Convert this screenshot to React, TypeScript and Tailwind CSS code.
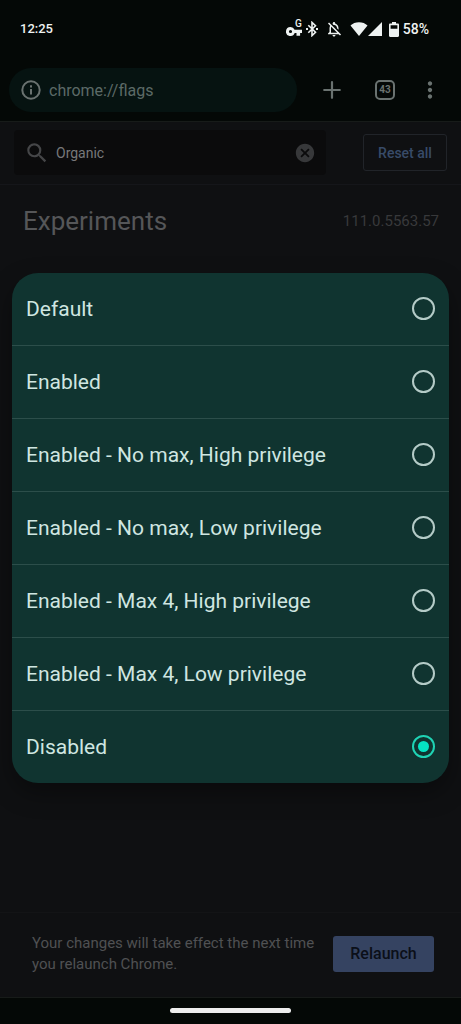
import { useState } from 'react'
import { MdCancel, MdMoreVert, MdOutlineNotificationsOff, MdSearch } from 'react-icons/md'

const OPTIONS = [
  'Default',
  'Enabled',
  'Enabled - No max, High privilege',
  'Enabled - No max, Low privilege',
  'Enabled - Max 4, High privilege',
  'Enabled - Max 4, Low privilege',
  'Disabled',
]

function KeyIcon() {
  return (
    <span className="relative block w-4 h-4">
      <svg viewBox="0 0 16 16" className="w-4 h-4" fill="currentColor" aria-hidden="true">
        <path
          fillRule="evenodd"
          d="M4.500 6a4.500 4.500 0 1 0 4.200 6h1.800v2.800h3.600V12H16V8.800H8.600A4.500 4.500 0 0 0 4.500 6zm0 2.900a1.600 1.600 0 1 1 0 3.200 1.600 1.600 0 0 1 0-3.200z"
        />
      </svg>
      <span className="absolute right-0 -top-[2px] text-[10px] leading-[10px] font-medium">G</span>
    </span>
  )
}

function BluetoothIcon() {
  return (
    <svg viewBox="0 0 14 16" className="w-[14px] h-4" fill="none" stroke="currentColor" strokeWidth="1.6" aria-hidden="true">
      <path d="M3.300 4.300l7.200 7L7 14.600V1.400l3.500 3.300-7.200 7" />
      <path d="M1 8h2M11 8h2" strokeWidth="2" />
    </svg>
  )
}

function WifiIcon() {
  return (
    <svg viewBox="0 0 18 14" className="w-[18px] h-[14px]" fill="currentColor" aria-hidden="true">
      <path d="M9 14 0.500 3.600C2.600 1.400 5.600 0.200 9 0.200s6.400 1.200 8.500 3.400z" />
    </svg>
  )
}

function SignalIcon() {
  return (
    <svg viewBox="0 0 14 14" className="w-[14px] h-[14px]" fill="currentColor" aria-hidden="true">
      <path d="M14 0v14H0z" />
    </svg>
  )
}

function BatteryIcon() {
  return (
    <svg viewBox="0 0 10 15" className="w-[10px] h-[15px]" fill="currentColor" aria-hidden="true">
      <path
        fillRule="evenodd"
        d="M3 0h4v1.600h1.800c.7 0 1.200.5 1.200 1.200v11c0 .7-.5 1.200-1.200 1.200H1.200C.5 15 0 14.500 0 13.800v-11c0-.7.5-1.200 1.200-1.200H3zM1.600 3.200v3.600h6.800V3.200z"
      />
    </svg>
  )
}

function InfoIcon() {
  return (
    <svg viewBox="0 0 20 20" className="w-5 h-5 shrink-0" fill="none" stroke="currentColor" strokeWidth="2" aria-hidden="true">
      <circle cx="10" cy="10" r="8.700" />
      <path d="M10 9v5.500M10 5.300v2.200" />
    </svg>
  )
}

function PlusIcon() {
  return (
    <svg viewBox="0 0 18 18" className="w-[18px] h-[18px]" stroke="currentColor" strokeWidth="2.200" strokeLinecap="round" aria-hidden="true">
      <path d="M9 1.200v15.600M1.200 9h15.600" />
    </svg>
  )
}

function StatusBar() {
  return (
    <div className="flex items-center justify-between h-[58px] pl-5 pr-8 text-[13px] font-medium text-[#eef2f1]">
      <span>12:25</span>
      <div className="flex items-center">
        <KeyIcon />
        <span className="ml-[3px]">
          <BluetoothIcon />
        </span>
        <MdOutlineNotificationsOff size={18} className="ml-1.5 mr-[7px]" />
        <WifiIcon />
        <SignalIcon />
        <span className="ml-[7px] mr-1">
          <BatteryIcon />
        </span>
        <span className="text-sm">58%</span>
      </div>
    </div>
  )
}

function BrowserBar() {
  return (
    <div className="flex items-center h-[63px] pl-[9px] pr-[18px] text-[#6a7270]">
      <div className="flex flex-1 items-center gap-2 h-11 rounded-full bg-[#061311] pl-3">
        <InfoIcon />
        <input
          aria-label="Address"
          defaultValue="chrome://flags"
          className="w-full min-w-0 pt-0.5 bg-transparent text-base text-[#5c6a67] outline-none"
        />
      </div>
      <button aria-label="New tab" className="ml-[26px]">
        <PlusIcon />
      </button>
      <button
        aria-label="Switch tabs"
        className="ml-[34px] w-5 h-5 rounded-[5px] border-2 border-[#6a7270] flex items-center justify-center text-[10px] font-bold"
      >
        43
      </button>
      <button aria-label="More options" className="ml-[22px]">
        <MdMoreVert size={26} />
      </button>
    </div>
  )
}

function SearchBar() {
  return (
    <div className="flex items-center justify-between h-[63px] pb-px px-[14px] border-b border-[#15161a]">
      <div className="flex flex-1 items-center h-[45px] mr-[37px] px-[10px] rounded-sm bg-[#0b0b0c] text-[#454648]">
        <MdSearch size={26} className="shrink-0" />
        <input
          aria-label="Search flags"
          defaultValue="Organic"
          className="flex-1 min-w-0 ml-1.5 bg-transparent text-sm text-[#77787a] outline-none"
        />
        <button aria-label="Clear search">
          <MdCancel size={22} className="text-[#37383a]" />
        </button>
      </div>
      <button className="w-[84px] h-[37px] rounded-[3px] border border-[#212429] text-sm font-medium text-[#384b68]">
        Reset all
      </button>
    </div>
  )
}

export default function App() {
  const [selected, setSelected] = useState('Disabled')

  return (
    <div className="relative min-h-screen flex flex-col bg-[#0f1012] font-[Roboto,sans-serif]">
      <header className="bg-[#040806] border-b border-[#171b19]">
        <StatusBar />
        <BrowserBar />
      </header>
      <SearchBar />
      <main className="flex-1">
        <div className="flex items-center justify-between pt-5 pl-[23px] pr-[22px]">
          <h1 className="text-[26px] leading-8 text-[#555658]">Experiments</h1>
          <span className="text-[15px] text-[#38393b]">111.0.5563.57</span>
        </div>
        <div className="grid grid-cols-2 mt-8 text-center text-sm text-[#2c2d2f]">
          <span className="pl-8">Available</span>
          <span>Unavailable</span>
        </div>
      </main>
      <footer className="flex items-center justify-between h-[85px] pb-0.5 pl-8 pr-[27px] border-t border-[#131416]">
        <p className="text-[15px] leading-[21px] text-[#505153] max-w-[285px]">
          Your changes will take effect the next time you relaunch Chrome.
        </p>
        <button className="w-[101px] h-9 rounded-[3px] bg-[#354361] text-base font-medium text-[#0b0f18]">
          Relaunch
        </button>
      </footer>
      <div className="flex items-center justify-center h-[27px] pb-0.5 border-t border-[#171b19] bg-[#040806]">
        <div className="w-[121px] h-[5px] rounded-full bg-[#ededed]" />
      </div>

      {/* Option picker */}
      <div className="absolute inset-0 flex items-center px-3 pt-[31px]">
        <div
          role="dialog"
          aria-label="Flag value"
          className="w-full rounded-[26px] overflow-hidden bg-[#103430] divide-y divide-[#2c4e4a] shadow-[0_10px_24px_rgba(0,0,0,0.35)]"
        >
          {OPTIONS.map(option => (
            <label key={option} className="flex items-center justify-between h-[73px] last:h-[72px] px-[14px] text-[21px] text-[#cfe6e1]">
              <span className="pt-0.5">{option}</span>
              <input
                type="radio"
                name="flag"
                checked={selected === option}
                onChange={() => setSelected(option)}
                className="appearance-none grid place-content-center w-[23px] h-[23px] rounded-full border-2 border-[#b4cbc7] checked:border-[#1fd3b4] before:w-[11px] before:h-[11px] before:rounded-full checked:before:bg-[#05e3c3]"
              />
            </label>
          ))}
        </div>
      </div>
    </div>
  )
}
